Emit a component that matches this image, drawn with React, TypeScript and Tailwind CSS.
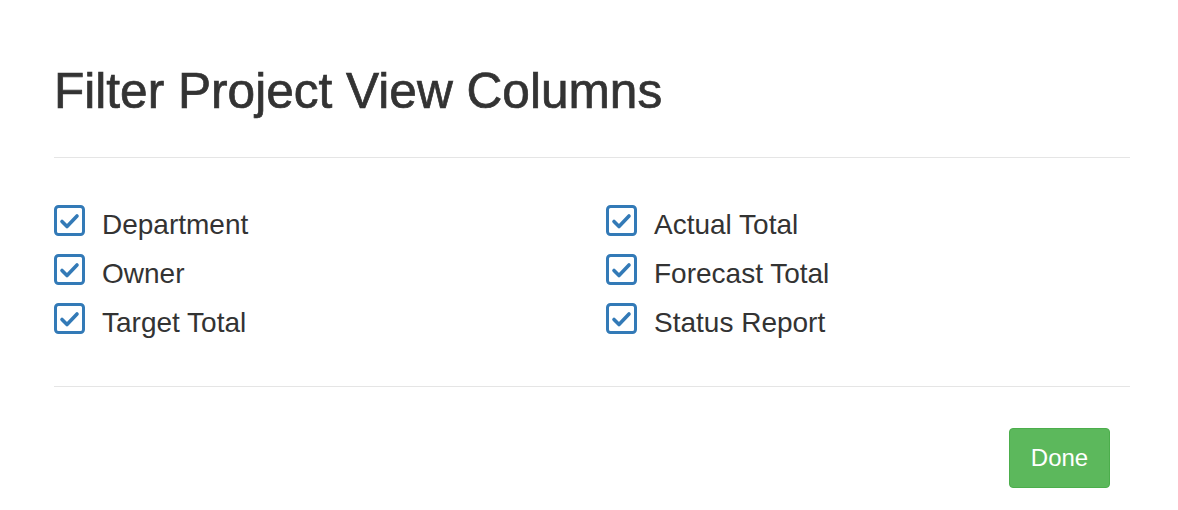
import React from "react";

const Check = () => (
  <svg width="31" height="31" viewBox="0 0 31 31" className="shrink-0">
    <rect x="1.5" y="1.5" width="28" height="28" rx="3" fill="#fff" stroke="#337ab7" strokeWidth="3" />
    <polyline points="8,16.5 13,21.5 23,11" fill="none" stroke="#337ab7" strokeWidth="3.6" strokeLinecap="round" strokeLinejoin="round" />
  </svg>
);

const Item = ({ label }: { label: string }) => (
  <div className="flex items-start h-[49px]">
    <div className="mt-[5px]">
      <Check />
    </div>
    <span className="ml-[17px] text-[28px] leading-[49px] text-[#333]">{label}</span>
  </div>
);

export default function App() {
  return (
    <div
      className="w-[1178px] h-[510px] bg-white pl-[54px] pr-[48px] overflow-hidden"
      style={{ fontFamily: '"Liberation Sans", Arial, sans-serif' }}
    >
      <div className="pt-[64px] pb-[39px] border-b border-[#e5e5e5]">
        <h1 className="text-[49.6px] leading-[54px] text-[#333] font-normal [-webkit-text-stroke:0.7px_#333]">
          Filter Project View Columns
        </h1>
      </div>
      <div className="grid grid-cols-[552px_1fr] pt-[42px] pb-[39px] border-b border-[#e5e5e5]">
        <div className="flex flex-col">
          <Item label="Department" />
          <Item label="Owner" />
          <Item label="Target Total" />
        </div>
        <div className="flex flex-col">
          <Item label="Actual Total" />
          <Item label="Forecast Total" />
          <Item label="Status Report" />
        </div>
      </div>
      <div className="flex justify-end pt-[41px] pr-[20px]">
        <button className="w-[101px] h-[60px] rounded-[4px] bg-[#5cb85c] border border-[#4cae4c] text-white text-[24px]">
          Done
        </button>
      </div>
    </div>
  );
}
